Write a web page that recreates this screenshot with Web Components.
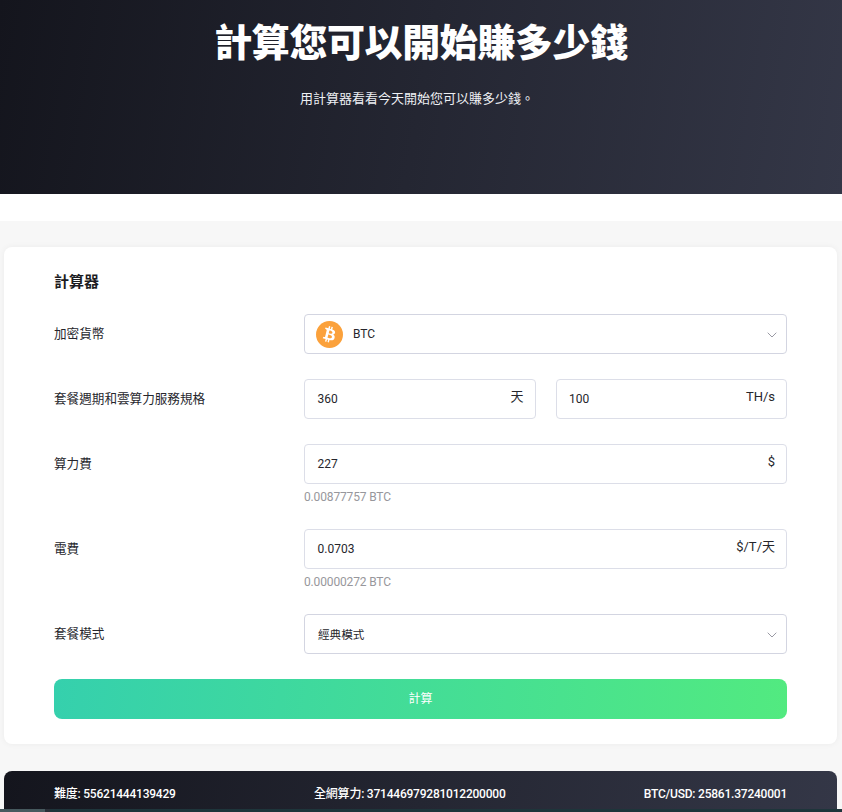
<!DOCTYPE html>
<html lang="zh-Hant">
<head>
<meta charset="utf-8">
<title>計算器</title>
<style>
html, body { margin: 0; padding: 0; background: #fff; height: 812px; overflow: hidden; }
body { font-family: Roboto, "Noto Sans CJK TC", sans-serif; }
</style>
</head>
<body>
<calc-hero heading="計算您可以開始賺多少錢" sub="用計算器看看今天開始您可以賺多少錢。"></calc-hero>
<calc-section>
  <calc-card>
    <calc-row label="加密貨幣">
      <calc-select value="BTC" coin></calc-select>
    </calc-row>
    <calc-row label="套餐週期和雲算力服務規格">
      <calc-input value="360" unit="天"></calc-input>
      <calc-input value="100" unit="TH/s"></calc-input>
    </calc-row>
    <calc-row label="算力費" hint="0.00877757 BTC">
      <calc-input value="227" unit="$"></calc-input>
    </calc-row>
    <calc-row label="電費" hint="0.00000272 BTC">
      <calc-input value="0.0703" unit="$/T/天"></calc-input>
    </calc-row>
    <calc-row label="套餐模式">
      <calc-select value="經典模式"></calc-select>
    </calc-row>
    <calc-button>計算</calc-button>
  </calc-card>
  <calc-stats>
    <span>難度: 55621444139429</span>
    <span>全網算力: 371446979281012200000</span>
    <span>BTC/USD: 25861.37240001</span>
  </calc-stats>
</calc-section>

<script>
const FONT = 'Roboto, "Noto Sans CJK TC", sans-serif';

class CalcHero extends HTMLElement {
  constructor() {
    super();
    const shadow = this.attachShadow({ mode: 'open' });
    shadow.innerHTML = `
<style>
:host { display: block; height: 194px; box-sizing: border-box; padding-top: 14px; text-align: center; color: #fff;
  background: linear-gradient(100deg, #14151d 0%, #343747 100%); font-family: ${FONT}; overflow: hidden; }
h1 { margin: 0; font-size: 38px; line-height: 58px; font-weight: 900; letter-spacing: -.4px; }
p { margin: 17px 8px 0 0; font-size: 13px; line-height: 20px; color: #eef0f4; }
</style>
<h1></h1>
<p></p>`;
    shadow.querySelector('h1').textContent = this.getAttribute('heading');
    shadow.querySelector('p').textContent = this.getAttribute('sub');
  }
}

class CalcSection extends HTMLElement {
  constructor() {
    super();
    this.attachShadow({ mode: 'open' }).innerHTML = `
<style>
:host { display: flex; flex-direction: column; gap: 27px; margin-top: 27px; padding: 26px 5px 0 4px; background: #f7f7f7; height: 591px; box-sizing: border-box; overflow: hidden; position: relative; }
.strip { position: absolute; left: 0; right: 0; bottom: 0; height: 3px; background: linear-gradient(90deg, #46595e 0, #46595e 45px, #2a2f38 45px, #2a2f38 50px, #1e353b 50px, #1e353b 100%); }
</style>
<slot></slot>
<div class="strip"></div>`;
  }
}

class CalcCard extends HTMLElement {
  constructor() {
    super();
    this.attachShadow({ mode: 'open' }).innerHTML = `
<style>
:host { display: block; background: #fff; border-radius: 8px; padding: 24px 50px 25px; height: 497px; box-sizing: border-box; flex: none;
  box-shadow: 0 0 6px rgba(0,0,0,.05); font-family: ${FONT}; }
h2 { margin: 0 0 21px; font-size: 15px; line-height: 22px; font-weight: 700; color: #1c1c22; }
</style>
<h2>計算器</h2>
<slot></slot>`;
  }
}

class CalcRow extends HTMLElement {
  constructor() {
    super();
    const shadow = this.attachShadow({ mode: 'open' });
    shadow.innerHTML = `
<style>
:host { display: grid; grid-template-columns: 250px 1fr; margin-bottom: 25px; font-size: 12.6px; color: #26262c; }
.label { height: 40px; line-height: 39px; }
.controls { display: flex; gap: 20px; }
.hint { font-size: 12px; line-height: 14px; margin: 6px 0 0; letter-spacing: -.15px; color: #97979c; }
</style>
<div class="label"></div>
<div>
  <div class="controls"><slot></slot></div>
  <div class="hint"></div>
</div>`;
    shadow.querySelector('.label').textContent = this.getAttribute('label');
    const hint = shadow.querySelector('.hint');
    if (this.hasAttribute('hint')) hint.textContent = this.getAttribute('hint');
    else hint.remove();
  }
}

class CalcInput extends HTMLElement {
  constructor() {
    super();
    const shadow = this.attachShadow({ mode: 'open' });
    shadow.innerHTML = `
<style>
:host { display: flex; flex: 1 1 0; justify-content: space-between; box-sizing: border-box; height: 40px; padding: 0 11px 0 12.5px;
  border: 1px solid #dcdee8; border-radius: 4px; background: #fff; font-size: 12px; color: #26262c; }
.v { line-height: 38px; }
.u { line-height: 34px; font-size: 13px; }
</style>
<span class="v"></span><span class="u"></span>`;
    shadow.querySelector('.v').textContent = this.getAttribute('value');
    shadow.querySelector('.u').textContent = this.getAttribute('unit');
  }
}

class CalcSelect extends HTMLElement {
  constructor() {
    super();
    const shadow = this.attachShadow({ mode: 'open' });
    shadow.innerHTML = `
<style>
:host { display: flex; flex: 1 1 0; align-items: center; box-sizing: border-box; height: 40px; padding: 0 9px 0 11px;
  border: 1px solid #d3d5e1; border-radius: 4px; background: #fff; font-size: 12px; color: #26262c; }
.v { flex: 1; }
svg.coin { width: 27px; height: 27px; margin-right: 10px; flex: none; }
svg.arrow { width: 10px; height: 6px; flex: none; margin-top: 2px; }
.plain { margin-left: 2px; font-size: 11.6px; }
</style>
<svg class="coin" viewBox="0 0 27 27">
  <circle cx="13.5" cy="13.5" r="13.5" fill="#fba13b"/>
  <path fill="#fff" fill-rule="evenodd" d="M19.1 11.7c.3-1.7-1-2.7-2.8-3.3l.6-2.3-1.4-.4-.6 2.3-1.1-.3.6-2.3-1.4-.4-.6 2.3-.9-.2-2-.5-.4 1.5s1 .2 1 .3c.6.1.7.5.6.8l-1.6 6.5c-.1.2-.3.4-.7.3 0 0-1-.3-1-.3l-.7 1.6 1.9.5 1 .3-.6 2.4 1.4.3.6-2.3 1.1.3-.6 2.3 1.4.4.6-2.4c2.4.5 4.2.3 5-1.9.6-1.8 0-2.8-1.3-3.5.9-.2 1.7-.9 1.9-2.1zm-3.2 4.5c-.4 1.8-3.4.8-4.4.6l.8-3.2c1 .2 4 .7 3.6 2.6zm.5-4.5c-.4 1.6-2.9.8-3.7.6l.7-2.9c.8.2 3.4.6 3 2.3z"/>
</svg>
<span class="v"></span>
<svg class="arrow" viewBox="0 0 10 6"><path d="M.7.7 5 5l4.3-4.3" fill="none" stroke="#9a9aa4" stroke-width="1"/></svg>`;
    const v = shadow.querySelector('.v');
    v.textContent = this.getAttribute('value');
    if (!this.hasAttribute('coin')) {
      shadow.querySelector('.coin').remove();
      v.classList.add('plain');
    }
  }
}

class CalcButton extends HTMLElement {
  constructor() {
    super();
    this.attachShadow({ mode: 'open' }).innerHTML = `
<style>
:host { display: block; height: 40px; border-radius: 8px; text-align: center; line-height: 40px; font-size: 12px; color: #fff;
  background: linear-gradient(95deg, #35d0ad 0%, #52ea80 100%); }
</style>
<slot></slot>`;
  }
}

class CalcStats extends HTMLElement {
  constructor() {
    super();
    this.attachShadow({ mode: 'open' }).innerHTML = `
<style>
:host { display: flex; justify-content: space-between; align-items: flex-start; flex: none; height: 60px; box-sizing: border-box; padding: 13px 50px 0;
  border-radius: 8px 8px 0 0; font-size: 12px; line-height: 20px; font-weight: 500; letter-spacing: -.22px; color: #fff; font-family: ${FONT};
  background: linear-gradient(100deg, #14151d 0%, #343747 100%); }
</style>
<slot></slot>`;
  }
}

customElements.define('calc-hero', CalcHero);
customElements.define('calc-section', CalcSection);
customElements.define('calc-card', CalcCard);
customElements.define('calc-row', CalcRow);
customElements.define('calc-input', CalcInput);
customElements.define('calc-select', CalcSelect);
customElements.define('calc-button', CalcButton);
customElements.define('calc-stats', CalcStats);
</script>
</body>
</html>
